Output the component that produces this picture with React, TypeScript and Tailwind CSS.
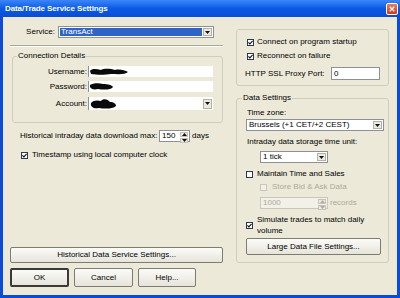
import React from "react";

const font = "font-['Liberation_Sans',Arial,sans-serif]";

const Check = ({ checked = false, disabled = false }: { checked?: boolean; disabled?: boolean }) => (
  <span
    className={`shrink-0 w-[7px] h-[7px] border flex items-center justify-center ${
      disabled ? "border-[#c9c7bb] bg-[#f1efe6]" : "border-[#2b3a4e] bg-white"
    }`}
  >
    {checked && (
      <svg viewBox="0 0 5 5" className="w-[5px] h-[5px]">
        <path d="M0.4 2.3 L1.9 3.9 L4.6 0.8" stroke="#111" strokeWidth="1.1" fill="none" />
      </svg>
    )}
  </span>
);

const Arrow = ({ disabled = false }: { disabled?: boolean }) => (
  <svg viewBox="0 0 5 3" className="w-[5px] h-[3px]">
    <path d="M0 0 H5 L2.5 3 Z" fill={disabled ? "#b0ad9f" : "#111"} />
  </svg>
);

const Combo = ({ text, cls, selected = false }: { text: string; cls: string; selected?: boolean }) => (
  <div className={`flex bg-white border border-[#8d9096] ${cls}`}>
    <div className="flex-1 flex items-center pl-[1px] py-[1px]">
      <span className={`h-full flex items-center px-[1px] ${selected ? "bg-[#2f63c6] text-white flex-1" : ""}`}>{text}</span>
    </div>
    <div className="w-[9px] m-[1px] bg-[#ebe9e0] border border-[#b3b1a5] flex items-center justify-center">
      <Arrow />
    </div>
  </div>
);

const Spin = ({ text, cls, disabled = false }: { text: string; cls: string; disabled?: boolean }) => (
  <div className={`flex border ${disabled ? "border-[#c9c7bb] bg-[#f2f0e7] text-[#aca899]" : "border-[#8d9096] bg-white"} ${cls}`}>
    <div className="flex-1 flex items-center pl-[2px]">{text}</div>
    <div className="w-[8px] flex flex-col m-[1px] gap-[1px]">
      <div className="flex-1 bg-[#ebe9e0] border border-[#c5c3b8] flex items-center justify-center">
        <span className="rotate-180 flex"><Arrow disabled={disabled} /></span>
      </div>
      <div className="flex-1 bg-[#ebe9e0] border border-[#c5c3b8] flex items-center justify-center">
        <Arrow disabled={disabled} />
      </div>
    </div>
  </div>
);

const Btn = ({ label, cls, primary = false }: { label: string; cls: string; primary?: boolean }) => (
  <button
    className={`flex items-center justify-center rounded-[2px] bg-gradient-to-b from-[#fbfbf8] to-[#e6e4da] ${
      primary ? "border-2 border-[#3a3a36]" : "border border-[#7d7c72]"
    } ${cls}`}
  >
    {label}
  </button>
);

const Scribble = ({ w, h, d }: { w: number; h: number; d: string }) => (
  <svg width={w} height={h} viewBox={`0 0 ${w} ${h}`}>
    <path d={d} fill="#0a0a0a" />
  </svg>
);

export default function App() {
  return (
    <div className={`w-[400px] h-[298px] flex flex-col bg-[#0b4bd9] text-[8px] leading-[10px] text-black ${font}`}>
      {/* title bar */}
      <div className="h-[17px] flex items-center justify-between bg-gradient-to-b from-[#3a86f8] via-[#0a5ae6] to-[#0b4cd2] pl-[5px] pr-[2px]">
        <span className="text-white font-bold text-[8px] tracking-[-0.1px]">Data/Trade Service Settings</span>
        <div className="w-[12px] h-[12px] rounded-[2px] border border-white bg-gradient-to-b from-[#ec7a5e] to-[#cc3b1c] flex items-center justify-center">
          <svg viewBox="0 0 8 8" className="w-[6px] h-[6px]">
            <path d="M1 1 L7 7 M7 1 L1 7" stroke="white" strokeWidth="1.6" />
          </svg>
        </div>
      </div>

      {/* body */}
      <div className="flex-1 mx-[3px] mb-[3px] bg-[#ece9d8] flex">
        {/* left column */}
        <div className="w-[213px] ml-[7px] flex flex-col pb-[8px]">
          <div className="mt-[9px] h-[12px] flex items-center">
            <span className="w-[45px] text-right">Service:</span>
            <Combo text="TransAct" cls="ml-[3px] w-[156px] h-[12px]" selected />
          </div>
          <div className="mt-[7px] border-t border-[#aca899] border-b border-b-white" />

          <fieldset className="mt-[4px] ml-[2px] h-[72px] border border-[#cfcdbf] rounded-[3px] pl-0 pr-[9px]">
            <legend className="ml-[4px] px-[1px] leading-[10px]">Connection Details</legend>
            <div className="pt-[5px] flex flex-col">
              <div className="h-[11px] flex items-center">
                <span className="w-[74px] text-right">Username:</span>
                <div className="ml-[1px] flex-1 h-full bg-white border-l border-[#8d9096] flex items-center">
                  <Scribble w={40} h={9} d="M1 4 C3 1 8 2 12 3 C16 1 22 2 26 3 C30 2 36 3 39 5 C36 8 28 7 22 7 C16 8 8 8 2 7 Z" />
                </div>
              </div>
              <div className="mt-[4px] h-[11px] flex items-center">
                <span className="w-[74px] text-right">Password:</span>
                <div className="ml-[1px] flex-1 h-full bg-white border-l border-[#8d9096] flex items-center">
                  <Scribble w={25} h={9} d="M1 3 C4 1 10 1 14 2 C19 2 23 3 24 5 C22 8 15 8 9 7 C5 8 2 7 1 5 Z" />
                </div>
              </div>
              <div className="mt-[5px] h-[13px] flex items-center">
                <span className="w-[74px] text-right">Account:</span>
                <div className="ml-[1px] flex-1 h-full bg-white border-l border-[#8d9096] flex items-center">
                  <div className="flex-1 flex items-center">
                    <Scribble w={28} h={12} d="M2 5 C4 2 9 2 12 3 C14 0 19 1 21 4 C25 4 27 6 27 8 C24 11 16 11 10 10 C5 11 1 9 2 5 Z" />
                  </div>
                  <div className="w-[9px] m-[1px] h-[10px] bg-[#ebe9e0] border border-[#b3b1a5] flex items-center justify-center">
                    <Arrow />
                  </div>
                </div>
              </div>
            </div>
          </fieldset>

          <div className="mt-[7px] h-[12px] flex items-center pl-[10px]">
            <span className="w-[139px]">Historical intraday data download max:</span>
            <Spin text="150" cls="w-[31px] h-[12px]" />
            <span className="ml-[2px]">days</span>
          </div>
          <div className="mt-[8px] h-[10px] flex items-center pl-[11px] gap-[4px]">
            <Check checked />
            <span>Timestamp using local computer clock</span>
          </div>

          <Btn label="Historical Data Service Settings..." cls="mt-auto h-[16px] w-full" />
          <div className="mt-[5px] h-[19px] flex gap-[5px]">
            <Btn label="OK" cls="w-[59px] h-full" primary />
            <Btn label="Cancel" cls="w-[59px] h-full" />
            <Btn label="Help..." cls="w-[58px] h-full" />
          </div>
        </div>

        {/* right column */}
        <div className="w-[153px] ml-[13px] flex flex-col">
          <div className="mt-[12px] h-[57px] border border-[#cfcdbf] rounded-[3px] flex flex-col pt-[7px]">
            <div className="h-[10px] flex items-center pl-[10px] gap-[3px]">
              <Check checked />
              <span>Connect on program startup</span>
            </div>
            <div className="mt-[4px] h-[10px] flex items-center pl-[10px] gap-[3px]">
              <Check checked />
              <span>Reconnect on failure</span>
            </div>
            <div className="mt-[6px] h-[13px] flex items-center pl-[8px]">
              <span className="w-[86px]">HTTP SSL Proxy Port:</span>
              <div className="w-[49px] h-full bg-white border border-[#8d9096] flex items-center pl-[2px]">0</div>
            </div>
          </div>

          <fieldset className="mt-[7px] h-[170px] border border-[#cfcdbf] rounded-[3px] p-0">
            <legend className="ml-[5px] px-[1px] leading-[10px]">Data Settings</legend>
            <div className="flex flex-col">
              <div className="mt-[5px] h-[10px] flex items-center pl-[10px]">Time zone:</div>
              <Combo text="Brussels (+1 CET/+2 CEST)" cls="mt-[1px] ml-[9px] w-[138px] h-[12px]" />
              <div className="mt-[6px] h-[10px] flex items-center pl-[10px]">Intraday data storage time unit:</div>
              <Combo text="1 tick" cls="mt-[4px] ml-[23px] w-[68px] h-[12px]" />
              <div className="mt-[6px] h-[10px] flex items-center pl-[9px] gap-[4px]">
                <Check />
                <span>Maintain Time and Sales</span>
              </div>
              <div className="mt-[3px] h-[10px] flex items-center pl-[23px] gap-[5px] text-[#aca899]">
                <Check disabled />
                <span>Store Bid &amp; Ask Data</span>
              </div>
              <div className="mt-[5px] h-[12px] flex items-center pl-[23px]">
                <Spin text="1000" cls="w-[68px] h-full" disabled />
                <span className="ml-[2px] text-[#aca899]">records</span>
              </div>
              <div className="mt-[5px] flex items-center pl-[9px] gap-[4px]">
                <Check checked />
                <span className="leading-[11px]">
                  Simulate trades to match daily
                  <br />
                  volume
                </span>
              </div>
              <Btn label="Large Data File Settings..." cls="mt-[2px] ml-[9px] w-[135px] h-[17px]" />
            </div>
          </fieldset>
        </div>
      </div>
    </div>
  );
}
